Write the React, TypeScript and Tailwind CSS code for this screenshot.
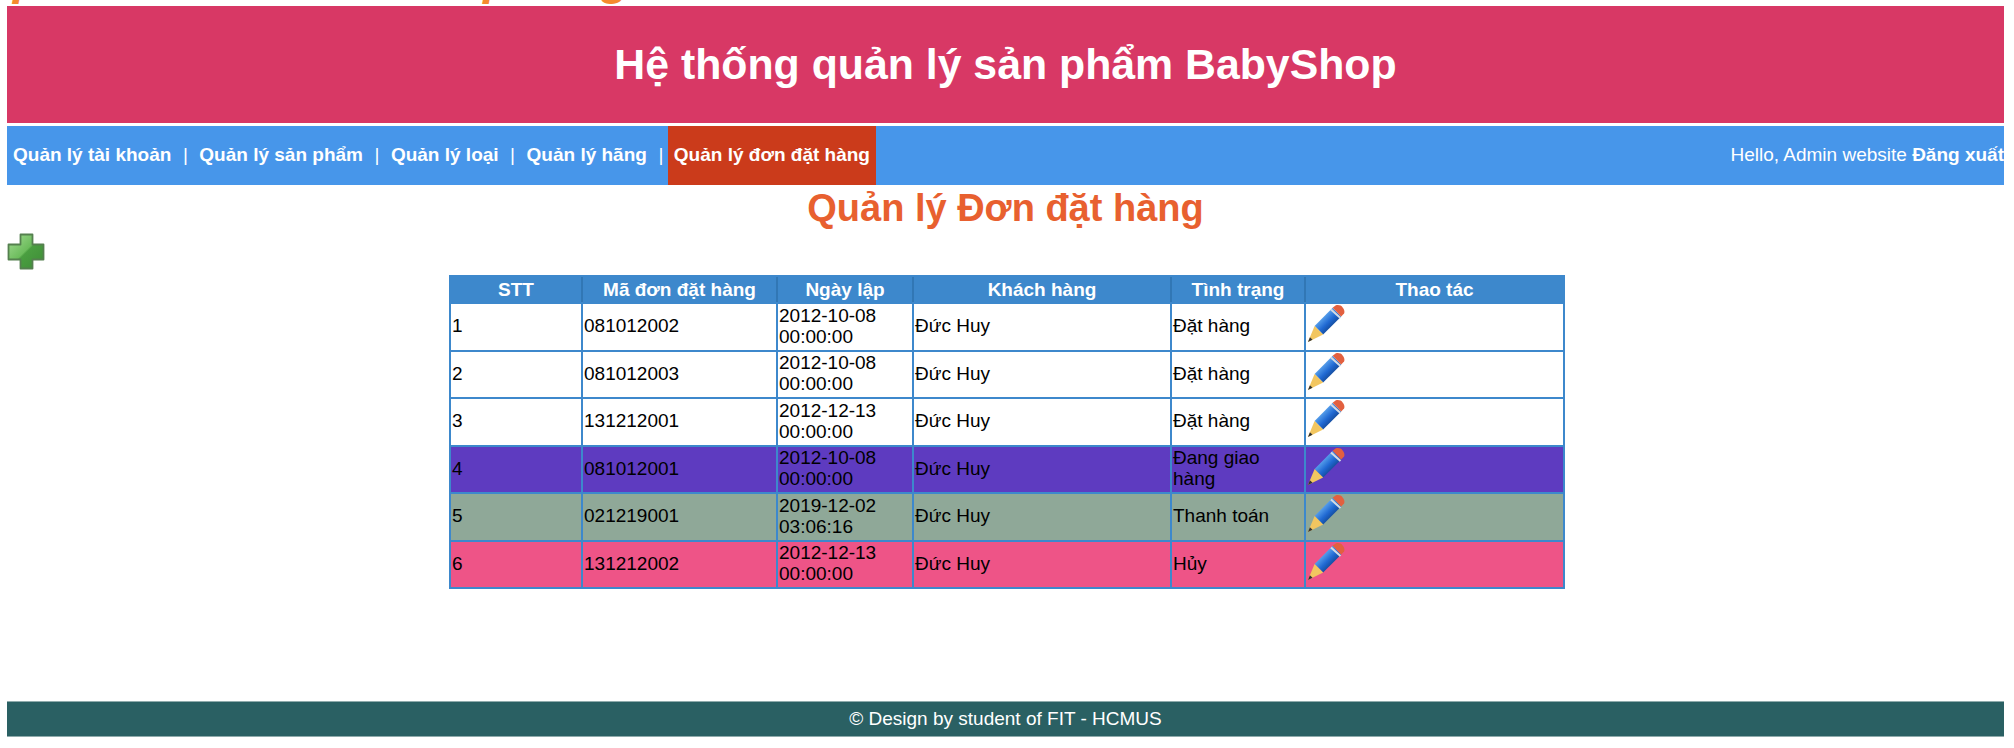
import React from "react";

const rows = [
  { id: 1, code: "081012002", date: "2012-10-08", time: "00:00:00", status: "Đặt hàng", bg: "bg-white" },
  { id: 2, code: "081012003", date: "2012-10-08", time: "00:00:00", status: "Đặt hàng", bg: "bg-white" },
  { id: 3, code: "131212001", date: "2012-12-13", time: "00:00:00", status: "Đặt hàng", bg: "bg-white" },
  { id: 4, code: "081012001", date: "2012-10-08", time: "00:00:00", status: "Đang giao hàng", bg: "bg-[#5e3bc0]" },
  { id: 5, code: "021219001", date: "2019-12-02", time: "03:06:16", status: "Thanh toán", bg: "bg-[#8fa898]" },
  { id: 6, code: "131212002", date: "2012-12-13", time: "00:00:00", status: "Hủy", bg: "bg-[#ee5487]" },
];

const links = ["Quản lý tài khoản", "Quản lý sản phẩm", "Quản lý loại", "Quản lý hãng"];

function PlusIcon() {
  return (
    <svg viewBox="0 0 38 37" className="mt-[1px] block h-[37px] w-[38px]" aria-hidden>
      <defs>
        <linearGradient id="plus" x1="0" y1="0" x2="1" y2="1">
          <stop offset="0" stopColor="#a4dc94" />
          <stop offset="0.48" stopColor="#6cbc5c" />
          <stop offset="0.52" stopColor="#4a9e40" />
          <stop offset="1" stopColor="#3d8c36" />
        </linearGradient>
      </defs>
      <path
        d="M13.500 1.500h12v10h11v15h-11v9h-12v-9h-12v-15h12z"
        fill="url(#plus)"
        stroke="#55804f"
        strokeWidth="1.800"
        strokeLinejoin="round"
      />
    </svg>
  );
}

function PencilIcon() {
  return (
    <svg viewBox="0 0 40 40" className="block h-[38px] w-[38px]" aria-hidden>
      <defs>
        <linearGradient id="pen" x1="0.2" y1="0.2" x2="0.8" y2="0.8">
          <stop offset="0.2" stopColor="#5aa2ec" />
          <stop offset="0.55" stopColor="#1f68d2" />
          <stop offset="0.85" stopColor="#134793" />
        </linearGradient>
      </defs>
      <path d="M8 22L27 3l9 9-19 19z" fill="url(#pen)" />
      <path d="M27 3l3-2.500c3-1 6 0 7.500 2s2.500 4 1.500 6.500l-3 3z" fill="#e2603f" />
      <path d="M26 4l10 9-1.500 1.500-10-9z" fill="#d3dae3" />
      <path d="M8 22l9 9-16 8z" fill="#f2c660" />
      <path d="M3.100 33.900l2.700 2.700L1 39z" fill="#333333" />
    </svg>
  );
}

export default function App() {
  return (
    <div className="min-h-[748px] bg-white font-['Liberation_Sans',Arial,sans-serif] text-black">
      {/* bas du titre coupé par le haut de la page : seules les jambes des lettres dépassent */}
      <div className="flex h-[6px] overflow-hidden">
        <div className="mt-[-49px] flex text-[48px] leading-[54px] font-bold text-[#f58a2e] italic">
          <span className="ml-[13px]">p</span>
          <span className="ml-[441px]">p</span>
          <span className="ml-[88px]">g</span>
        </div>
      </div>
      <div className="mx-[7px] w-[1997px]">
        <header className="flex h-[117px] items-center justify-center bg-[#d83865]">
          <h1 className="text-[42.8px] font-bold text-white">Hệ thống quản lý sản phẩm BabyShop</h1>
        </header>
        <nav className="mt-[3px] flex h-[59px] items-center overflow-hidden bg-[#4796ea] text-[19px] text-white">
          <div className="flex h-full items-center pl-[6px] font-bold">
            {links.map((l) => (
              <React.Fragment key={l}>
                <span>{l}</span>
                <span className="mx-[11.500px] font-normal">|</span>
              </React.Fragment>
            ))}
            <span className="ml-[-7px] flex h-full items-center bg-[#cb3b1b] px-[6px]">Quản lý đơn đặt hàng</span>
          </div>
          <div className="ml-auto whitespace-nowrap">
            Hello, Admin website <b>Đăng xuất</b>
          </div>
        </nav>
        <h2 className="text-center text-[38px] leading-[47px] font-bold text-[#e8602f]">Quản lý Đơn đặt hàng</h2>
        <PlusIcon />
        <table className="mt-[5px] ml-[442px] w-[1116px] table-fixed border-separate border-spacing-0 border-2 border-[#3d88cc] text-[19px] leading-[21px]">
          <colgroup>
            <col className="w-[132px]" />
            <col className="w-[195px]" />
            <col className="w-[136px]" />
            <col className="w-[258px]" />
            <col className="w-[134px]" />
            <col />
          </colgroup>
          <thead>
            <tr className="h-[25px] bg-[#3d88cc] text-white">
              {["STT", "Mã đơn đặt hàng", "Ngày lập", "Khách hàng", "Tình trạng", "Thao tác"].map((h) => (
                <th key={h} className="border-r-2 border-[#3177b5] p-0 font-bold last:border-r-0">
                  {h}
                </th>
              ))}
            </tr>
          </thead>
          <tbody>
            {rows.map((r) => (
              <tr key={r.id} className={`h-[47.500px] ${r.bg}`}>
                <td className="border-t-2 border-r-2 border-[#3d88cc] px-[1px] pt-0 pb-[2px]">{r.id}</td>
                <td className="border-t-2 border-r-2 border-[#3d88cc] px-[1px] pt-0 pb-[2px]">{r.code}</td>
                <td className="border-t-2 border-r-2 border-[#3d88cc] px-[1px] pt-0 pb-[2px]">
                  {r.date}
                  <br />
                  {r.time}
                </td>
                <td className="border-t-2 border-r-2 border-[#3d88cc] px-[1px] pt-0 pb-[2px]">Đức Huy</td>
                <td className="border-t-2 border-r-2 border-[#3d88cc] px-[1px] pt-0 pb-[2px]">{r.status}</td>
                <td className="border-t-2 border-[#3d88cc] px-[1px] pt-[1px] pb-0 align-top">
                  <PencilIcon />
                </td>
              </tr>
            ))}
          </tbody>
        </table>
        <footer className="mt-[112px] flex h-[36px] items-center justify-center border-y border-y-[#8fabac] bg-[#2a6063] text-[19px] text-white">
          © Design by student of FIT - HCMUS
        </footer>
      </div>
    </div>
  );
}
